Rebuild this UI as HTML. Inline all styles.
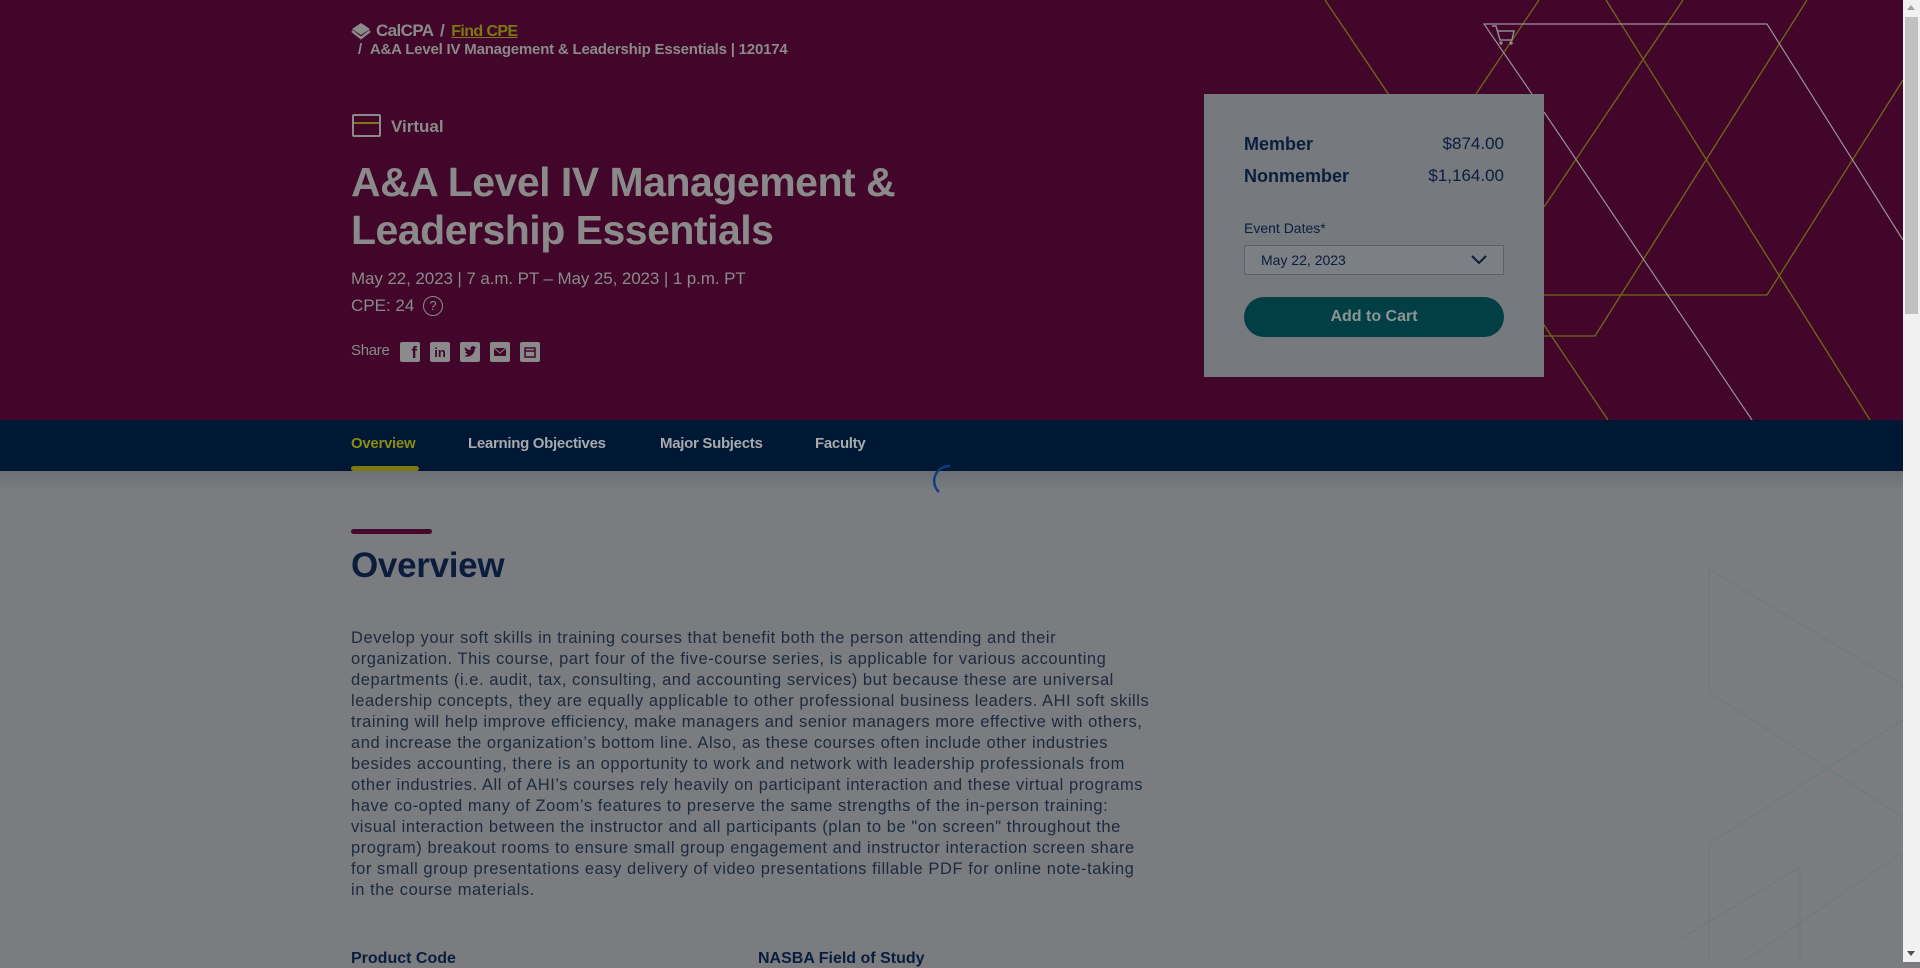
<!DOCTYPE html>
<html><head><meta charset="utf-8"><style>
*{margin:0;padding:0;box-sizing:border-box}
body{width:1920px;height:962px;overflow:hidden;background:#7a7c7f;font-family:"Liberation Sans",sans-serif;position:relative}
.hero{position:absolute;left:0;top:0;width:1903px;height:420px;background:#42062a;overflow:hidden}
.abs{position:absolute;white-space:nowrap}
.nav{position:absolute;left:0;top:420px;width:1903px;height:51px;background:#001833}
.nav span{position:absolute;top:15px;font-size:15px;font-weight:bold;color:#a6a9ae;letter-spacing:-0.3px}
.card{position:absolute;left:1204px;top:94px;width:340px;height:283px;background:#767a7e}
.sb{position:absolute;left:1903px;top:0;width:17px;height:962px;background:#f1f1f1}
.thumb{position:absolute;left:1905px;top:17px;width:13px;height:297px;background:#c1c1c1}
p.txt{position:absolute;left:351px;top:628px;white-space:nowrap;font-size:16.5px;line-height:21px;color:#1d2a3e;letter-spacing:0.55px}
</style></head><body>
<div class="hero">
<svg width="1903" height="420" style="position:absolute;left:0;top:0" fill="none">
<g stroke="#6f6a12" stroke-width="1.3">
<line x1="1325" y1="0" x2="1608" y2="420"/>
<line x1="1539" y1="0" x2="1476" y2="94"/>
<line x1="1683" y1="0" x2="1544" y2="207"/>
<polyline points="1544,336 1595,336 1807,0"/>
<polyline points="1544,295 1767,295 1903,80"/>
<line x1="1606" y1="0" x2="1870" y2="420"/>
</g>
<g stroke="#9a8f98" stroke-width="1.2">
<polyline points="1532,94 1484,24 1767,24 1903,240"/>
<line x1="1544" y1="112" x2="1752" y2="420"/>
</g>
<g stroke="#8a8a8a" stroke-width="1.5"><path d="M1492 26 L1496 26 L1500 40 L1512 40 L1514 31 L1497 31"/><circle cx="1501" cy="43" r="1"/><circle cx="1511" cy="43" r="1"/></g>
</svg>
<svg class="abs" style="left:351px;top:22px" width="20" height="19" viewBox="0 0 20 19"><path d="M10 1 L19 7 L10 13 L1 7 Z" fill="#8a8a8a"/><path d="M1 9 L10 16 L19 9" stroke="#8a8a8a" stroke-width="2.5" fill="none"/></svg>
<div class="abs" style="left:376px;top:21px;font-size:17px;font-weight:bold;color:#8a8a8a;letter-spacing:-0.6px">CalCPA <span style="margin:0 3px">/</span> <span style="color:#7a7a10;text-decoration:underline;font-size:16px">Find CPE</span></div>
<div class="abs" style="left:358px;top:41px;font-size:15px;font-weight:bold;color:#8a8a8a;letter-spacing:-0.2px">/ &nbsp;A&amp;A Level IV Management &amp; Leadership Essentials | 120174</div>
<div class="abs" style="left:352px;top:114px;width:29px;height:23px;border:2px solid #8a8a8a;border-radius:2px"><div style="position:absolute;left:0;right:0;top:6px;height:2px;background:#7a7a10"></div></div>
<div class="abs" style="left:391px;top:117px;font-size:17px;font-weight:bold;color:#8a8a8a">Virtual</div>
<div class="abs" style="left:351px;top:158px;font-size:41px;line-height:48px;font-weight:bold;color:#8a8a8a;letter-spacing:-0.5px">A&amp;A Level IV Management &amp;<br>Leadership Essentials</div>
<div class="abs" style="left:351px;top:269px;font-size:17px;color:#8a8a8a;letter-spacing:-0.1px">May 22, 2023 | 7 a.m. PT – May 25, 2023 | 1 p.m. PT</div>
<div class="abs" style="left:351px;top:296px;font-size:17px;color:#8a8a8a">CPE: 24</div>
<div class="abs" style="left:423px;top:296px;width:20px;height:20px;border:1.5px solid #8a8a8a;border-radius:50%;font-size:13px;color:#8a8a8a;text-align:center;line-height:17px">?</div>
<div class="abs" style="left:351px;top:342px;font-size:15px;color:#8a8a8a;letter-spacing:-0.3px">Share</div>
<div class="abs" style="left:400px;top:342px;width:20px;height:20px;background:#8a8a8a;border-radius:2px;color:#42062a;font-weight:bold;font-size:17px;text-align:right;padding-right:3px;line-height:22px">f</div>
<div class="abs" style="left:430px;top:342px;width:20px;height:20px;background:#8a8a8a;border-radius:2px;color:#42062a;font-weight:bold;font-size:13px;text-align:center;line-height:21px">in</div>
<div class="abs" style="left:460px;top:342px;width:20px;height:20px;background:#8a8a8a;border-radius:2px"><svg width="20" height="20"><path d="M4 14 Q9 16 13 12 Q15 9 15 6 L17 5 L15 5 Q13 3 11 5 Q10 7 11 8 Q7 8 5 5 Q4 8 7 10 L5 10 Q6 12 8 12 Q6 14 4 14Z" fill="#42062a"/></svg></div>
<div class="abs" style="left:490px;top:342px;width:20px;height:20px;background:#8a8a8a;border-radius:2px"><svg width="20" height="20"><rect x="4" y="6" width="12" height="8" fill="#42062a"/><path d="M4 6 L10 11 L16 6" stroke="#8a8a8a" fill="none"/></svg></div>
<div class="abs" style="left:520px;top:342px;width:20px;height:20px;background:#8a8a8a;border-radius:2px"><svg width="20" height="20"><rect x="5" y="6" width="10" height="9" fill="none" stroke="#42062a" stroke-width="1.5"/><line x1="5" y1="9" x2="15" y2="9" stroke="#42062a" stroke-width="1.5"/></svg></div>
</div>
<div class="card">
<div class="abs" style="left:40px;top:40px;font-size:18px;font-weight:bold;color:#0b1d3d">Member</div>
<div class="abs" style="right:40px;top:40px;font-size:17px;color:#0b1d3d">$874.00</div>
<div class="abs" style="left:40px;top:72px;font-size:18px;font-weight:bold;color:#0b1d3d">Nonmember</div>
<div class="abs" style="right:40px;top:72px;font-size:17px;color:#0b1d3d">$1,164.00</div>
<div class="abs" style="left:40px;top:126px;font-size:14px;color:#0b1d3d">Event Dates*</div>
<div class="abs" style="left:40px;top:151px;width:260px;height:30px;border:1px solid #5e6266;background:#7c7f83"><span style="position:absolute;left:16px;top:6px;font-size:14px;color:#0b1d3d">May 22, 2023</span><svg style="position:absolute;right:16px;top:9px" width="16" height="10"><path d="M1 1 L8 8 L15 1" stroke="#0b1d3d" stroke-width="2" fill="none"/></svg></div>
<div class="abs" style="left:40px;top:203px;width:260px;height:40px;border-radius:20px;background:#023f45;color:#8c9596;font-size:16px;font-weight:bold;text-align:center;line-height:40px">Add to Cart</div>
</div>
<div class="nav">
<span style="left:351px;color:#8a8a14">Overview</span>
<div style="position:absolute;left:351px;top:46px;width:68px;height:5px;background:#7a7a10;border-radius:3px"></div>
<span style="left:468px">Learning Objectives</span>
<span style="left:660px">Major Subjects</span>
<span style="left:815px">Faculty</span>
</div>
<div style="position:absolute;left:0;top:471px;width:1903px;height:20px;background:linear-gradient(#6c6f73,#7a7c7f)"></div>
<svg class="abs" style="left:930px;top:461px" width="40" height="40"><path d="M20 5 A15 15 0 0 0 9 31" stroke="#0d3f80" stroke-width="2.5" fill="none"/></svg>
<svg class="abs" style="left:1680px;top:540px" width="223" height="422" fill="none" stroke="#6a7a7a" stroke-width="1">
<polyline points="29,29 29,152"/><line x1="29" y1="29" x2="223" y2="145"/><line x1="29" y1="152" x2="223" y2="277"/>
<line x1="29" y1="304" x2="223" y2="180"/><line x1="29" y1="304" x2="29" y2="422"/>
<polyline points="0,399 120,327 120,422"/><line x1="63" y1="422" x2="223" y2="312"/>
</svg>
<div style="position:absolute;left:351px;top:529px;width:81px;height:5px;background:#45072c;border-radius:3px"></div>
<div class="abs" style="left:351px;top:546px;font-size:35px;font-weight:bold;color:#0b1d3d;letter-spacing:-0.3px">Overview</div>
<p class="txt">Develop your soft skills in training courses that benefit both the person attending and their<br>organization. This course, part four of the five-course series, is applicable for various accounting<br>departments (i.e. audit, tax, consulting, and accounting services) but because these are universal<br>leadership concepts, they are equally applicable to other professional business leaders. AHI soft skills<br>training will help improve efficiency, make managers and senior managers more effective with others,<br>and increase the organization’s bottom line. Also, as these courses often include other industries<br>besides accounting, there is an opportunity to work and network with leadership professionals from<br>other industries. All of AHI’s courses rely heavily on participant interaction and these virtual programs<br>have co-opted many of Zoom’s features to preserve the same strengths of the in-person training:<br>visual interaction between the instructor and all participants (plan to be "on screen" throughout the<br>program) breakout rooms to ensure small group engagement and instructor interaction screen share<br>for small group presentations easy delivery of video presentations fillable PDF for online note-taking<br>in the course materials.</p>
<div class="abs" style="left:351px;top:950px;font-size:16px;font-weight:bold;color:#0b1d3d">Product Code</div>
<div class="abs" style="left:758px;top:950px;font-size:16px;font-weight:bold;color:#0b1d3d">NASBA Field of Study</div>
<div class="sb"></div><div class="thumb"></div>
<div class="abs" style="left:1907px;top:5px;width:0;height:0;border-left:4px solid transparent;border-right:4px solid transparent;border-bottom:5px solid #a3a3a3"></div>
<div class="abs" style="left:1907px;top:951px;width:0;height:0;border-left:4px solid transparent;border-right:4px solid transparent;border-top:5px solid #505050"></div>
</body></html>
